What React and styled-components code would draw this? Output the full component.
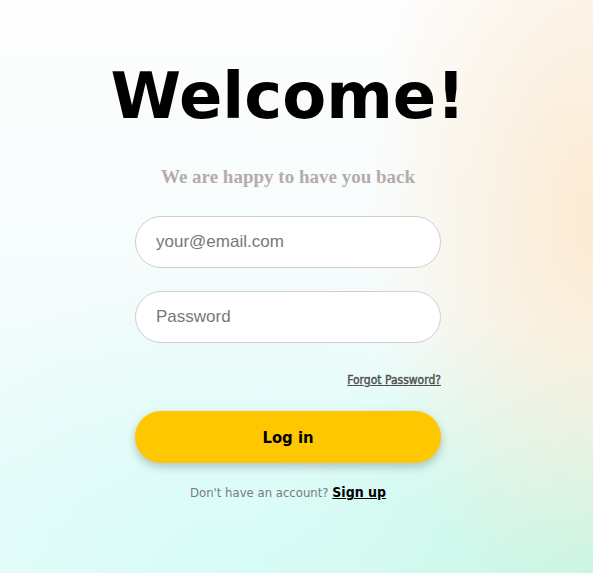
import React from 'react';
import styled, { createGlobalStyle } from 'styled-components';

const GlobalStyle = createGlobalStyle`
  html, body {
    margin: 0;
    padding: 0;
  }
  body {
    font-family: "DejaVu Sans", sans-serif;
  }
  * {
    box-sizing: border-box;
  }
`;

// fond pastel : blanc en haut à gauche, pêche à droite, menthe en bas
const Page = styled.div`
  min-height: 100vh;
  width: 100%;
  padding-right: 17px;
  display: flex;
  justify-content: center;
  background:
    radial-gradient(ellipse 38% 70% at 100% 38%, rgba(252, 234, 210, 1) 0%, rgba(252, 234, 210, 0) 100%),
    radial-gradient(ellipse 60% 45% at 100% 100%, rgba(196, 246, 228, 1) 0%, rgba(196, 246, 228, 0) 100%),
    radial-gradient(ellipse 80% 55% at 40% 100%, rgba(214, 252, 248, 1) 0%, rgba(214, 252, 248, 0) 100%),
    linear-gradient(180deg, #fdfdfd 0%, #f6fcfc 50%, #eefcfb 100%);
`;

const Card = styled.div`
  width: 306px;
  padding-top: 52px;
  display: flex;
  flex-direction: column;
  align-items: stretch;
`;

const Title = styled.h1`
  align-self: center;
  margin: 0;
  font-family: "DejaVu Sans", sans-serif;
  font-weight: bold;
  font-size: 64px;
  line-height: 88px;
  text-align: center;
  white-space: nowrap;
  color: #000;
`;

const Subtitle = styled.p`
  margin: 24px 0 26px;
  font-family: "Liberation Serif", serif;
  font-weight: bold;
  font-size: 19px;
  line-height: 26px;
  text-align: center;
  white-space: nowrap;
  color: #b6abab;
`;

const Field = styled.input`
  height: 52px;
  width: 100%;
  padding: 0 20px;
  margin-bottom: ${(p) => p.$gap || 0}px;
  border: 1px solid #cfcfcf;
  border-radius: 26px;
  background: #fff;
  font-family: "Liberation Sans", Arial, sans-serif;
  font-size: 17px;
  color: #333;
  outline: none;

  &::placeholder {
    color: #777;
  }
`;

const ForgotRow = styled.div`
  display: flex;
  justify-content: flex-end;
  margin: 30px 0 24px;
`;

const ForgotLink = styled.a`
  font-family: "DejaVu Sans Condensed", "DejaVu Sans", sans-serif;
  font-size: 12px;
  line-height: 14px;
  color: #4f4f4f;
  -webkit-text-stroke: 0.4px #4f4f4f;
  text-decoration: underline;
`;

const LoginButton = styled.button`
  height: 52px;
  width: 100%;
  border: none;
  border-radius: 26px;
  background: #fec700;
  box-shadow: 0 4px 10px rgba(0, 0, 0, 0.22);
  font-family: "DejaVu Sans Condensed", "DejaVu Sans", sans-serif;
  font-weight: bold;
  font-size: 16.5px;
  color: #000;
  cursor: pointer;
`;

const Footer = styled.p`
  margin: 20px 0 0;
  text-align: center;
  font-family: "DejaVu Sans Condensed", "DejaVu Sans", sans-serif;
  font-size: 13px;
  line-height: 18px;
  color: #7a7a7a;
`;

const SignUp = styled.a`
  font-weight: bold;
  font-size: 14px;
  color: #000;
  text-decoration: underline;
`;

export default function App() {
  return (
    <>
      <GlobalStyle />
      <Page>
        <Card>
          <Title>Welcome!</Title>
          <Subtitle>We are happy to have you back</Subtitle>
          <Field type="email" placeholder="your@email.com" $gap={23} />
          <Field type="password" placeholder="Password" />
          <ForgotRow>
            <ForgotLink href="#">Forgot Password?</ForgotLink>
          </ForgotRow>
          <LoginButton type="button">Log in</LoginButton>
          <Footer>
            Don't have an account? <SignUp href="#">Sign up</SignUp>
          </Footer>
        </Card>
      </Page>
    </>
  );
}
